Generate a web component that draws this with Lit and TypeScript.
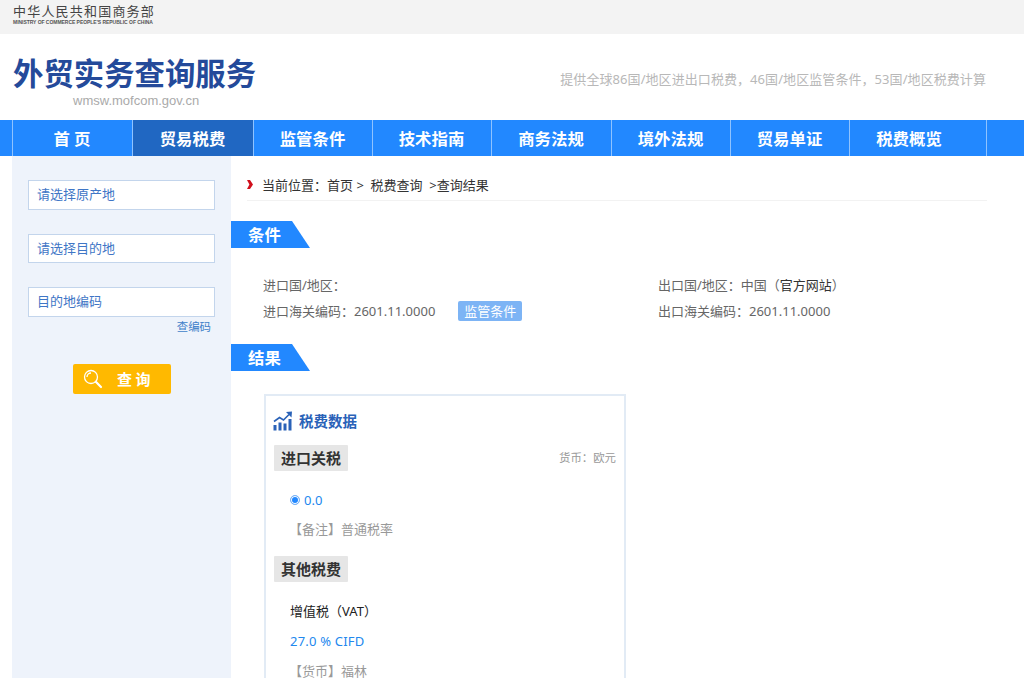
import { LitElement, html, css } from "lit";
import { customElement } from "lit/decorators.js";

const NAV = ["首 页", "贸易税费", "监管条件", "技术指南", "商务法规", "境外法规", "贸易单证", "税费概览"];
const WIDTHS = [120, 121, 119, 119, 120, 119, 119, 138];

@customElement("app-root")
export class AppRoot extends LitElement {
  static styles = css`
    :host {
      display: block;
      height: 678px;
      overflow: hidden;
      background: #fff;
      font-family: "Noto Sans", "Noto Sans CJK SC", sans-serif;
      font-size: 13px;
      color: #666;
    }
    .topbar { height: 34px; background: #f3f3f3; padding: 4px 0 0 13px; box-sizing: border-box; }
    .gov-cn { font-size: 13px; line-height: 15px; letter-spacing: 1.2px; color: #444; white-space: nowrap; }
    .gov-en { font-family: "Liberation Sans", sans-serif; font-size: 5px; line-height: 7px; font-weight: bold; color: #555; white-space: nowrap; letter-spacing: -0.04px; }
    .header { height: 86px; padding: 0 38px 0 13px; display: flex; justify-content: space-between; box-sizing: border-box; }
    .title { font-size: 30.4px; line-height: 40px; font-weight: bold; color: #244a9a; margin-top: 20px; margin-bottom: -1px; white-space: nowrap; }
    .site { font-family: "Liberation Sans", sans-serif; font-size: 13px; line-height: 16px; color: #aaa; margin: -1px 0 0 60px; }
    .slogan { font-size: 13px; line-height: 16px; color: #b8b8b8; margin-top: 37px; white-space: nowrap; letter-spacing: 0.07px; }
    .nav { height: 36px; background: #2288ff; display: flex; padding-left: 12px; }
    .nav-item {
      box-sizing: border-box; border-left: 1px solid #8fc3ff; color: #fff; font-size: 16.4px; font-weight: bold;
      line-height: 38px; text-align: center; white-space: nowrap; padding-right: 1px;
    }
    .nav-item.active { background: #2067c2; }
    .nav-item.last { border-right: 1px solid #8fc3ff; padding-right: 18px; }
    .body { display: flex; padding-left: 12px; }
    .side { width: 219px; flex: none; height: 522px; background: #eef3fb; box-sizing: border-box; padding: 24px 16px 0 16px; }
    .field {
      box-sizing: border-box; height: 29.5px; border: 1px solid #c3d5ec; background: #fff; color: #3f76c6;
      padding-left: 8px; font-size: 13px; line-height: 26px; margin-bottom: 24px;
    }
    .field.code { margin-bottom: 0; }
    .lookup { text-align: right; font-size: 11.4px; line-height: 18px; color: #3f7fc9; padding-right: 4px; margin-top: 1px; }
    .search {
      margin: 28.5px 0 0 45px; width: 98px; height: 30px; background: #ffb900; border-radius: 2px;
      display: flex; align-items: center; color: #fff; font-weight: bold; font-size: 15px; letter-spacing: 3.5px;
    }
    .search svg { margin: 0 14px 0 10px; }
    .search span { padding-bottom: 1px; }
    .main { flex: 1; min-width: 0; }
    .crumb-wrap { margin: 0 37px 0 16px; height: 45px; border-bottom: 1px solid #f2f2f2; box-sizing: border-box; display: flex; align-items: center; padding-top: 12px; color: #333; white-space: pre; }
    .crumb-wrap svg { margin-right: 9px; }
    .tag {
      width: 79px; height: 27px; box-sizing: border-box; background: #2288ff; color: #fff; font-size: 16.4px; font-weight: bold;
      line-height: 28px; padding-left: 17px; clip-path: polygon(0 0, 61px 0, 100% 100%, 0 100%);
    }
    .tag.first { margin-top: 20px; }
    .cond { display: grid; grid-template-columns: 395px 1fr; padding: 23.5px 0 20.5px 32px; grid-auto-rows: 26px; align-items: center; white-space: nowrap; }
    .cond-cell { display: flex; align-items: center; }
    .dark { color: #333; }
    .btn { margin-left: 23px; background: #7db4f5; color: #fff; padding: 0 6px; line-height: 20px; border-radius: 2px; }
    .card { margin: 23px 0 0 33px; width: 362px; height: 400px; box-sizing: border-box; border: 2px solid #e2ebf5; padding: 14px 8px; }
    .card-title { display: flex; align-items: center; gap: 6px; color: #2a62b8; font-size: 14.5px; font-weight: bold; height: 22px; margin-left: -1px; }
    .card-title span { padding-bottom: 2px; }
    .row { display: flex; justify-content: space-between; align-items: center; margin-top: 13px; }
    .chip { background: #e6e6e6; color: #333; font-size: 15px; font-weight: bold; line-height: 26px; padding: 0 7px; border-radius: 1px; width: fit-content; }
    .chip.next { margin-top: 12px; }
    .currency { font-size: 11.4px; color: #999; margin-top: -3px; }
    .line { padding-left: 16px; line-height: 30px; white-space: nowrap; }
    .blue { color: #2288ee; }
    .grey { color: #999; }
    .black { color: #222; }
    .radio-line { display: flex; align-items: center; gap: 4px; margin-top: 14px; }
    .radio { box-sizing: border-box; width: 10px; height: 10px; border-radius: 50%; border: 1px solid #7db4f5; background: #2288ff; box-shadow: inset 0 0 0 1px #fff; }
    .spaced { margin-top: 14px; }
    .note { margin-left: -1px; }
    .tight { margin-top: -1px; }
    .rate { letter-spacing: 0.2px; }
  `;

  render() {
    return html`
      <div class="topbar">
        <div class="gov-cn">中华人民共和国商务部</div>
        <div class="gov-en">MINISTRY OF COMMERCE PEOPLE'S REPUBLIC OF CHINA</div>
      </div>
      <div class="header">
        <div>
          <div class="title">外贸实务查询服务</div>
          <div class="site">wmsw.mofcom.gov.cn</div>
        </div>
        <div class="slogan">提供全球86国/地区进出口税费，46国/地区监管条件，53国/地区税费计算</div>
      </div>
      <div class="nav">
        ${NAV.map((n, i) => html`<div
          class="nav-item ${i === 1 ? "active" : ""} ${i === 7 ? "last" : ""}"
          style="width:${WIDTHS[i]}px">${n}</div>`)}
      </div>
      <div class="body">
        <aside class="side">
          <div class="field">请选择原产地</div>
          <div class="field">请选择目的地</div>
          <div class="field code">目的地编码</div>
          <div class="lookup">查编码</div>
          <div class="search">
            <svg width="20" height="20" viewBox="0 0 20 20" fill="none" stroke="#fff" stroke-width="1.3">
              <circle cx="8" cy="8" r="6.5"/>
              <path d="M12.8 12.8 L18 18" stroke-width="2.2" stroke-linecap="round"/>
              <path d="M4 8 A4 4 0 0 1 8 4"/>
            </svg>
            <span>查询</span>
          </div>
        </aside>
        <main class="main">
          <div class="crumb-wrap">
            <svg width="6" height="9" viewBox="0 0 6 9"><path d="M0 0 L3 0 L6 4.5 L3 9 L0 9 L2.4 4.5 Z" fill="#d0101c"/></svg>
            <span>当前位置：首页 &gt;  税费查询  &gt;查询结果</span>
          </div>
          <div class="tag first">条件</div>
          <div class="cond">
            <div>进口国/地区：</div>
            <div>出口国/地区：中国（<span class="dark">官方网站</span>）</div>
            <div class="cond-cell"><span>进口海关编码：2601.11.0000</span><span class="btn">监管条件</span></div>
            <div>出口海关编码：2601.11.0000</div>
          </div>
          <div class="tag">结果</div>
          <div class="card">
            <div class="card-title">
              <svg width="20" height="20" viewBox="0 0 20 20" fill="#2a62b8">
                <rect x="0.5" y="14" width="3" height="5.5"/>
                <rect x="5.5" y="11.5" width="3" height="8"/>
                <rect x="10.5" y="12.5" width="3" height="7"/>
                <rect x="15.5" y="8" width="3" height="11.5"/>
                <path d="M1 10.5 L6.5 6.5 L10.5 9 L16 3.5" fill="none" stroke="#2a62b8" stroke-width="1.6"/>
                <path d="M13 1 L19 0.5 L18.5 6.5 Z"/>
              </svg>
              <span>税费数据</span>
            </div>
            <div class="row">
              <div class="chip">进口关税</div>
              <div class="currency">货币：欧元</div>
            </div>
            <div class="line blue radio-line"><span class="radio"></span><span>0.0</span></div>
            <div class="line grey note tight">【备注】普通税率</div>
            <div class="chip next">其他税费</div>
            <div class="line black spaced">增值税（VAT）</div>
            <div class="line blue rate">27.0 % CIFD</div>
            <div class="line grey note">【货币】福林</div>
          </div>
        </main>
      </div>
    `;
  }
}
